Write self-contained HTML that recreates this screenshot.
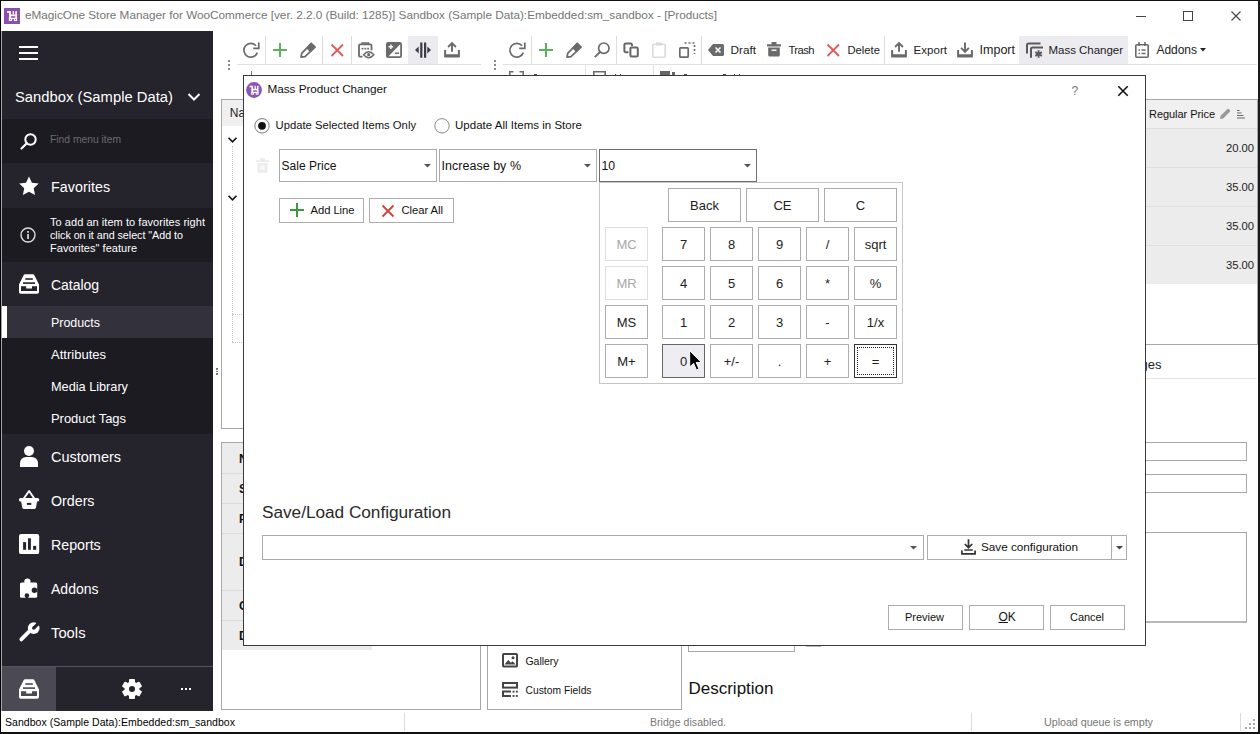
<!DOCTYPE html>
<html><head><meta charset="utf-8"><title>Store Manager</title>
<style>
html,body{margin:0;padding:0;}
body{width:1260px;height:734px;position:relative;overflow:hidden;background:#fff;font-family:"Liberation Sans",sans-serif;}
.t{position:absolute;white-space:nowrap;}
.r{position:absolute;box-sizing:border-box;}
svg{display:block;overflow:visible;}
</style></head><body>
<div class="r" style="left:0px;top:0px;width:1260px;height:734px;background:#fff;"></div>
<svg class="r" style="left:4px;top:8px;" width="16" height="16" viewBox="0 0 16 16"><rect width="16" height="16" fill="#8a4fb0"/><rect x="3.100" y="3.100" width="3.200" height="1.700" fill="#fff"/><rect x="5" y="3.100" width="2" height="7.200" fill="#fff"/><rect x="8.600" y="3.100" width="1.400" height="3.600" fill="#fff"/><rect x="11.300" y="3.100" width="1.700" height="7.200" fill="#fff"/><rect x="6.500" y="6.500" width="5" height="1.700" fill="#fff"/><rect x="4.800" y="9.800" width="3.200" height="3.200" fill="#fff"/><rect x="9.900" y="9.800" width="3.200" height="3.200" fill="#fff"/><rect x="7.500" y="9.800" width="3" height="1.300" fill="#fff"/><rect x="6" y="11" width="0.900" height="0.900" fill="#8a4fb0"/><rect x="11" y="11" width="0.900" height="0.900" fill="#8a4fb0"/></svg>
<div class="t" style="left:25px;top:7.0px;font-size:11.75px;line-height:16px;color:#757575;letter-spacing:-0.006px;">eMagicOne Store Manager for WooCommerce [ver. 2.2.0 (Build: 1285)] Sandbox (Sample Data):Embedded:sm_sandbox - [Products]</div>
<div class="r" style="left:1136px;top:16px;width:10px;height:1px;background:#444;"></div>
<div class="r" style="left:1183px;top:11px;width:10px;height:10px;border:1px solid #444;"></div>
<svg class="r" style="left:1230.5px;top:11px;" width="10" height="10" viewBox="0 0 10 10"><path d="M0.5 0.5L9.5 9.5M9.5 0.5L0.5 9.5" stroke="#444" stroke-width="1.1"/></svg>
<div class="r" style="left:2px;top:31px;width:211px;height:680px;background:#1c1b22;"></div>
<div class="r" style="left:2px;top:31px;width:211px;height:88px;background:#25232c;"></div>
<div class="r" style="left:2px;top:163px;width:211px;height:45px;background:#25232c;"></div>
<div class="r" style="left:2px;top:262px;width:211px;height:44px;background:#25232c;"></div>
<div class="r" style="left:2px;top:306px;width:211px;height:32px;background:#33313c;"></div>
<div class="r" style="left:2px;top:306px;width:5px;height:32px;background:#fff;"></div>
<div class="r" style="left:2px;top:434px;width:211px;height:233px;background:#25232c;"></div>
<div class="r" style="left:2px;top:666px;width:211px;height:45px;background:#25232c;border-top:1px solid #55545d;"></div>
<div class="r" style="left:2px;top:667px;width:54px;height:44px;background:#4b4954;"></div>
<div class="r" style="left:19px;top:46px;width:19px;height:2px;background:#fff;"></div>
<div class="r" style="left:19px;top:52px;width:19px;height:2px;background:#fff;"></div>
<div class="r" style="left:19px;top:58px;width:19px;height:2px;background:#fff;"></div>
<div class="t" style="left:15px;top:87.5px;font-size:14.75px;line-height:19px;color:#fff;letter-spacing:0.029px;">Sandbox (Sample Data)</div>
<svg class="r" style="left:187px;top:92px;" width="14" height="10" viewBox="0 0 14 10"><path d="M1.5 2L7 7.5L12.5 2" fill="none" stroke="#fff" stroke-width="2"/></svg>
<svg class="r" style="left:20px;top:132px;" width="18" height="18" viewBox="0 0 18 18"><circle cx="10.5" cy="7.5" r="5.2" fill="none" stroke="#fff" stroke-width="2"/><path d="M6.8 11.2L1.5 16.5" stroke="#fff" stroke-width="2.2" stroke-linecap="round"/></svg>
<div class="t" style="left:50px;top:133.0px;font-size:10.25px;line-height:14px;color:#6b6a70;letter-spacing:0.027px;">Find menu item</div>
<svg class="r" style="left:19px;top:176px;" width="20" height="20" viewBox="0 0 20 20"><path d="M10 0.5l2.9 6.3 6.8.8-5 4.7 1.3 6.8L10 15.7 3.9 19.1l1.3-6.8-5-4.7 6.8-.8z" fill="#fff"/></svg>
<div class="t" style="left:51px;top:178.0px;font-size:14.25px;line-height:18px;color:#fff;letter-spacing:0.050px;">Favorites</div>
<svg class="r" style="left:20px;top:227px;" width="16" height="16" viewBox="0 0 16 16"><circle cx="8" cy="8" r="7" fill="none" stroke="#ddd" stroke-width="1.4"/><rect x="7.2" y="7" width="1.7" height="5" fill="#ddd"/><rect x="7.2" y="4" width="1.7" height="1.8" fill="#ddd"/></svg>
<div class="t" style="left:50px;top:214.5px;font-size:11.0px;line-height:15px;color:#fff;letter-spacing:0.048px;">To add an item to favorites right</div>
<div class="t" style="left:50px;top:227.5px;font-size:10.75px;line-height:15px;color:#fff;letter-spacing:-0.037px;">click on it and select "Add to</div>
<div class="t" style="left:50px;top:240.5px;font-size:11.0px;line-height:15px;color:#fff;letter-spacing:0.033px;">Favorites" feature</div>
<svg class="r" style="left:19px;top:274px;" width="20" height="20" viewBox="0 0 20 20"><path d="M6 0.300H14a1.500 1.500 0 0 1 1.400 1L20 10.500V18a1.800 1.800 0 0 1-1.800 1.800H1.800A1.800 1.800 0 0 1 0 18V10.500L4.600 1.300A1.500 1.500 0 0 1 6 0.300z" fill="#fff"/><rect x="6.300" y="4.200" width="7.500" height="1.600" fill="#25232c"/><rect x="4" y="8.300" width="12" height="1.600" fill="#25232c"/><path d="M2 12.300h5.200v2.100h5.800v-2.100H18v4.600H2z" fill="#25232c"/></svg>
<div class="t" style="left:51px;top:276.0px;font-size:14.0px;line-height:18px;color:#fff;letter-spacing:-0.044px;">Catalog</div>
<div class="t" style="left:51px;top:314.6px;font-size:12.5px;line-height:16px;color:#fff;letter-spacing:-0.047px;">Products</div>
<div class="t" style="left:51px;top:345.5px;font-size:13.0px;line-height:17px;color:#fff;letter-spacing:0.009px;">Attributes</div>
<div class="t" style="left:51px;top:377.9px;font-size:12.75px;line-height:17px;color:#fff;letter-spacing:-0.021px;">Media Library</div>
<div class="t" style="left:51px;top:409.5px;font-size:13.0px;line-height:17px;color:#fff;letter-spacing:-0.058px;">Product Tags</div>
<svg class="r" style="left:20px;top:446px;" width="18" height="21" viewBox="0 0 18 21"><circle cx="9" cy="5" r="5" fill="#fff"/><path d="M0 21v-4a6 6 0 0 1 6-6h6a6 6 0 0 1 6 6v4z" fill="#fff"/></svg>
<div class="t" style="left:51px;top:448.0px;font-size:14.5px;line-height:18px;color:#fff;letter-spacing:-0.012px;">Customers</div>
<svg class="r" style="left:19px;top:490px;" width="20" height="20" viewBox="0 0 20 20"><path d="M4.600 8.700L10.100 1L15.500 8.700" fill="none" stroke="#fff" stroke-width="1.900" stroke-linejoin="round"/><rect x="0" y="8" width="20.200" height="3.600" rx="1.600" fill="#fff"/><path d="M1.900 10h16.400l-1.300 7.600a1.600 1.600 0 0 1-1.600 1.300H4.800a1.600 1.600 0 0 1-1.600-1.300z" fill="#fff"/><rect x="7.900" y="12.900" width="4.400" height="2" fill="#25232c"/></svg>
<div class="t" style="left:51px;top:492.0px;font-size:14.25px;line-height:18px;color:#fff;letter-spacing:-0.011px;">Orders</div>
<svg class="r" style="left:19px;top:534px;" width="20" height="20" viewBox="0 0 20 20"><rect width="20.200" height="20.100" rx="2.200" fill="#fff"/><rect x="4.100" y="8.100" width="3" height="7.700" fill="#25232c"/><rect x="9" y="4.300" width="2.900" height="11.500" fill="#25232c"/><rect x="14.100" y="11.900" width="3.100" height="3.900" fill="#25232c"/></svg>
<div class="t" style="left:51px;top:536.0px;font-size:14.25px;line-height:18px;color:#fff;letter-spacing:-0.033px;">Reports</div>
<svg class="r" style="left:19px;top:578px;" width="20" height="21" viewBox="0 0 20 21"><rect x="1" y="4.500" width="17.200" height="15.300" rx="1.600" fill="#fff"/><circle cx="8.400" cy="3.500" r="3.100" fill="#fff"/><circle cx="15.400" cy="12.200" r="2.700" fill="#25232c"/><rect x="15.400" y="10.900" width="3" height="2.600" fill="#25232c"/><circle cx="7.900" cy="17.500" r="2.300" fill="#25232c"/><rect x="6.700" y="17.500" width="2.400" height="2.500" fill="#25232c"/></svg>
<div class="t" style="left:51px;top:579.8px;font-size:14.0px;line-height:18px;color:#fff;letter-spacing:0.023px;">Addons</div>
<svg class="r" style="left:18px;top:622px;" width="22" height="22" viewBox="0 0 22 22"><path d="M3.300 17.400L12.800 7.900" stroke="#fff" stroke-width="3.800" stroke-linecap="round"/><circle cx="15.700" cy="6.100" r="5.900" fill="#fff"/><path d="M16.900 7.300L14.500 4.900L20.500-1.100L22.900 1.300z" fill="#25232c"/><circle cx="15.700" cy="6.100" r="1.700" fill="#25232c"/></svg>
<div class="t" style="left:51px;top:623.5px;font-size:14.75px;line-height:19px;color:#fff;letter-spacing:0.017px;">Tools</div>
<svg class="r" style="left:19px;top:679px;" width="20" height="20" viewBox="0 0 20 20"><path d="M6 0.300H14a1.500 1.500 0 0 1 1.400 1L20 10.500V18a1.800 1.800 0 0 1-1.800 1.800H1.800A1.800 1.800 0 0 1 0 18V10.500L4.600 1.300A1.500 1.500 0 0 1 6 0.300z" fill="#fff"/><rect x="6.300" y="4.200" width="7.500" height="1.600" fill="#4b4954"/><rect x="4" y="8.300" width="12" height="1.600" fill="#4b4954"/><path d="M2 12.300h5.200v2.100h5.800v-2.100H18v4.600H2z" fill="#4b4954"/></svg>
<svg class="r" style="left:122px;top:679px;" width="20" height="20" viewBox="0 0 20 20"><g transform="translate(10,10)"><g fill="#fff"><rect x="-3" y="-10.100" width="6" height="20.200" rx="1" transform="rotate(0)"/><rect x="-3" y="-10.100" width="6" height="20.200" rx="1" transform="rotate(60)"/><rect x="-3" y="-10.100" width="6" height="20.200" rx="1" transform="rotate(120)"/><circle r="7.500"/></g><circle r="3" fill="#25232c"/></g></svg>
<div class="r" style="left:181px;top:688px;width:2px;height:2px;background:#fff;"></div>
<div class="r" style="left:185px;top:688px;width:2px;height:2px;background:#fff;"></div>
<div class="r" style="left:189px;top:688px;width:2px;height:2px;background:#fff;"></div>
<div class="r" style="left:0px;top:0px;width:1px;height:734px;background:#000;"></div>
<div class="r" style="left:1px;top:31px;width:1px;height:680px;background:#a5a5ad;"></div>
<div class="r" style="left:0px;top:0px;width:1260px;height:1px;background:#111;"></div>
<div class="r" style="left:1258px;top:0px;width:2px;height:734px;background:#1a1a1a;"></div>
<div class="r" style="left:0px;top:732px;width:1260px;height:2px;background:#111;"></div>
<div class="t" style="left:5px;top:714.5px;font-size:10.5px;line-height:14px;color:#000;letter-spacing:0.044px;">Sandbox (Sample Data):Embedded:sm_sandbox</div>
<div class="r" style="left:404px;top:713px;width:1px;height:18px;background:#dcdcdc;"></div>
<div class="r" style="left:971px;top:713px;width:1px;height:18px;background:#dcdcdc;"></div>
<div class="r" style="left:1240px;top:713px;width:1px;height:18px;background:#dcdcdc;"></div>
<div class="t" style="left:650px;top:715.0px;font-size:10.5px;line-height:14px;color:#777;letter-spacing:0.047px;">Bridge disabled.</div>
<div class="t" style="left:1044px;top:714.5px;font-size:10.75px;line-height:15px;color:#777;letter-spacing:-0.048px;">Upload queue is empty</div>
<div class="r" style="left:1252.5px;top:718.7px;width:2px;height:2px;background:#a8a8a8;"></div>
<div class="r" style="left:1248.5px;top:722.7px;width:2px;height:2px;background:#a8a8a8;"></div>
<div class="r" style="left:1252.5px;top:722.7px;width:2px;height:2px;background:#a8a8a8;"></div>
<div class="r" style="left:1244.5px;top:726.7px;width:2px;height:2px;background:#a8a8a8;"></div>
<div class="r" style="left:1248.5px;top:726.7px;width:2px;height:2px;background:#a8a8a8;"></div>
<div class="r" style="left:1252.5px;top:726.7px;width:2px;height:2px;background:#a8a8a8;"></div>
<div class="r" style="left:408px;top:36px;width:30px;height:28px;background:#ebebf0;"></div>
<div class="r" style="left:237px;top:64px;width:244px;height:1px;background:#e2e2e2;"></div>
<div class="r" style="left:228px;top:60px;width:2px;height:2px;background:#8a8a8a;"></div>
<div class="r" style="left:228px;top:64px;width:2px;height:2px;background:#8a8a8a;"></div>
<div class="r" style="left:228px;top:68px;width:2px;height:2px;background:#8a8a8a;"></div>
<div class="r" style="left:251px;top:71px;width:1px;height:4px;background:#777;"></div>
<svg class="r" style="left:242.5px;top:42px;" width="17" height="16" viewBox="0 0 17 16"><path d="M14.300 10.600A6.900 6.900 0 1 1 13.100 3.800" fill="none" stroke="#6a6a6a" stroke-width="1.700"/><path d="M10.200 6.300h5.600V0.400" fill="none" stroke="#6a6a6a" stroke-width="1.700"/></svg>
<div class="r" style="left:265px;top:36px;width:1px;height:28px;background:#dcdcdc;"></div>
<svg class="r" style="left:273.0px;top:43.0px;" width="14" height="14" viewBox="0 0 14 14"><path d="M7.0 0V14M0 7.0H14" stroke="#5fae5c" stroke-width="2"/></svg>
<svg class="r" style="left:300px;top:42px;" width="16" height="16" viewBox="0 0 16 16"><path d="M1 15.200L1.700 11.300L11.200 1.400L15 5.200L5 14.700Z" fill="none" stroke="#6a6a6a" stroke-width="1.700" stroke-linejoin="round"/><path d="M6.300 6.300L11.200 0.800L15.600 5.200L10.400 10.200Z" fill="#6a6a6a"/></svg>
<div class="r" style="left:322px;top:36px;width:1px;height:28px;background:#dcdcdc;"></div>
<svg class="r" style="left:331.25px;top:43.75px;" width="12.5" height="12.5" viewBox="0 0 12.5 12.5"><path d="M0.500 0.500L12.0 12.0M12.0 0.500L0.500 12.0" stroke="#dc5c58" stroke-width="1.8"/></svg>
<div class="r" style="left:351px;top:36px;width:1px;height:28px;background:#dcdcdc;"></div>
<svg class="r" style="left:358px;top:42px;" width="16" height="16" viewBox="0 0 16 16"><path d="M4.500 14.700H2.300a1.300 1.300 0 0 1-1.300-1.300V3.600a1.300 1.300 0 0 1 1.300-1.300h9.900a1.300 1.300 0 0 1 1.300 1.300V8.300" fill="none" stroke="#6a6a6a" stroke-width="1.800"/><path d="M4.200 2.500V1h6.200v1.500" fill="none" stroke="#6a6a6a" stroke-width="1.700"/><rect x="3.600" y="5.800" width="1.800" height="1.700" fill="#6a6a6a"/><rect x="6.400" y="5.800" width="1.800" height="1.700" fill="#6a6a6a"/><rect x="9.200" y="5.800" width="1.800" height="1.700" fill="#6a6a6a"/><path d="M5.600 12.700q5-6 10.200 0q-5.200 6-10.200 0z" fill="#fff" stroke="#6a6a6a" stroke-width="1.500"/><circle cx="10.700" cy="12.700" r="1.600" fill="#6a6a6a"/></svg>
<svg class="r" style="left:386px;top:42px;" width="16" height="16" viewBox="0 0 16 16"><rect x="0.900" y="0.900" width="14.200" height="14.200" rx="1.200" fill="#6a6a6a" stroke="#6a6a6a" stroke-width="1.800"/><path d="M14.200 2.200V14.200H2.600z" fill="#fff"/><path d="M2.600 4.700h4.600M4.900 2.400v4.600" stroke="#fff" stroke-width="1.400"/><path d="M8.800 11.200h4.300" stroke="#6a6a6a" stroke-width="1.500"/></svg>
<svg class="r" style="left:415px;top:42px;" width="16" height="16" viewBox="0 0 16 16"><path d="M6.300 0.400v15.400M10.100 0.400v15.400" stroke="#3c3c46" stroke-width="2.200"/><path d="M3.700 4.400v7.200L0 8zM12.300 4.400v7.200L16 8z" fill="#3c3c46"/></svg>
<svg class="r" style="left:444px;top:42px;" width="16" height="16" viewBox="0 0 16 16"><path d="M0.100 8.100h2v4.100h11.800V8.100h2v6.300a1.200 1.200 0 0 1-1.200 1.200H1.300a1.200 1.200 0 0 1-1.200-1.200z" fill="#6a6a6a"/><path d="M8 9.800V1.200M4.100 5L8 1l3.900 4" fill="none" stroke="#6a6a6a" stroke-width="1.900"/></svg>
<div class="r" style="left:1019px;top:36px;width:109px;height:28px;background:#ebebf0;"></div>
<div class="r" style="left:503px;top:64px;width:754px;height:1px;background:#e2e2e2;"></div>
<div class="r" style="left:494px;top:60px;width:2px;height:2px;background:#8a8a8a;"></div>
<div class="r" style="left:494px;top:64px;width:2px;height:2px;background:#8a8a8a;"></div>
<div class="r" style="left:494px;top:68px;width:2px;height:2px;background:#8a8a8a;"></div>
<svg class="r" style="left:508.5px;top:42px;" width="17" height="16" viewBox="0 0 17 16"><path d="M14.300 10.600A6.900 6.900 0 1 1 13.100 3.800" fill="none" stroke="#6a6a6a" stroke-width="1.700"/><path d="M10.200 6.300h5.600V0.400" fill="none" stroke="#6a6a6a" stroke-width="1.700"/></svg>
<div class="r" style="left:531px;top:36px;width:1px;height:28px;background:#dcdcdc;"></div>
<svg class="r" style="left:539.0px;top:43.0px;" width="14" height="14" viewBox="0 0 14 14"><path d="M7.0 0V14M0 7.0H14" stroke="#5fae5c" stroke-width="2"/></svg>
<svg class="r" style="left:566px;top:42px;" width="16" height="16" viewBox="0 0 16 16"><path d="M1 15.200L1.700 11.300L11.200 1.400L15 5.200L5 14.700Z" fill="none" stroke="#6a6a6a" stroke-width="1.700" stroke-linejoin="round"/><path d="M6.300 6.300L11.200 0.800L15.600 5.200L10.400 10.200Z" fill="#6a6a6a"/></svg>
<svg class="r" style="left:594px;top:42px;" width="16" height="16" viewBox="0 0 16 16"><circle cx="9.800" cy="6.200" r="5.200" fill="none" stroke="#6a6a6a" stroke-width="1.700"/><path d="M6 10L0.800 15.200" stroke="#6a6a6a" stroke-width="1.900"/></svg>
<div class="r" style="left:616px;top:36px;width:1px;height:28px;background:#dcdcdc;"></div>
<svg class="r" style="left:623px;top:42px;" width="16" height="16" viewBox="0 0 16 16"><path d="M5.500 10.200H2.600a1.200 1.200 0 0 1-1.200-1.200V2.800A1.200 1.200 0 0 1 2.600 1.600h5.200A1.200 1.200 0 0 1 9 2.800v1.200" fill="none" stroke="#666" stroke-width="2"/><rect x="7.400" y="5.400" width="7.400" height="9" rx="1.200" fill="none" stroke="#666" stroke-width="2"/></svg>
<svg class="r" style="left:652px;top:42px;" width="14" height="16" viewBox="0 0 14 16"><rect x="0.800" y="2.300" width="12.400" height="12.900" rx="1.200" fill="none" stroke="#dadada" stroke-width="1.600"/><rect x="4" y="0.500" width="6" height="3" fill="#dadada"/></svg>
<svg class="r" style="left:679px;top:42px;" width="16" height="16" viewBox="0 0 16 16"><rect x="0.800" y="5.800" width="8.400" height="9.400" rx="1" fill="none" stroke="#6a6a6a" stroke-width="1.700"/><path d="M5.500 1h10v11" fill="none" stroke="#6a6a6a" stroke-width="1.600" stroke-dasharray="2 2"/></svg>
<div class="r" style="left:701px;top:36px;width:1px;height:28px;background:#dcdcdc;"></div>
<svg class="r" style="left:708px;top:44px;" width="16" height="12" viewBox="0 0 16 12"><path d="M5 0h9.500a1.500 1.500 0 0 1 1.500 1.500v9a1.500 1.500 0 0 1-1.500 1.500H5L0 6z" fill="#6a6a6a"/><path d="M7.500 3.500l5 5M12.500 3.500l-5 5" stroke="#fff" stroke-width="1.500"/></svg>
<div class="t" style="left:730.5px;top:42.0px;font-size:11.75px;line-height:16px;color:#222;letter-spacing:0.010px;">Draft</div>
<svg class="r" style="left:767px;top:42px;" width="14" height="15" viewBox="0 0 14 15"><path d="M0 2.200h14v2.300H0zM4.500 0h5v2.500h-5z" fill="#6a6a6a"/><path d="M1.200 5.500h11.600v7.500a1.500 1.500 0 0 1-1.500 1.500H2.700a1.500 1.500 0 0 1-1.500-1.500z" fill="#6a6a6a"/><rect x="4.500" y="7.500" width="5" height="1.400" fill="#fff"/></svg>
<div class="t" style="left:788.5px;top:42.5px;font-size:11.25px;line-height:15px;color:#222;letter-spacing:-0.584px;">Trash</div>
<svg class="r" style="left:826.75px;top:43.75px;" width="12.5" height="12.5" viewBox="0 0 12.5 12.5"><path d="M0.500 0.500L12.0 12.0M12.0 0.500L0.500 12.0" stroke="#dc5c58" stroke-width="1.8"/></svg>
<div class="t" style="left:847.5px;top:42.5px;font-size:11.25px;line-height:15px;color:#222;letter-spacing:-0.004px;">Delete</div>
<div class="r" style="left:884px;top:36px;width:1px;height:28px;background:#dcdcdc;"></div>
<svg class="r" style="left:891px;top:42px;" width="16" height="16" viewBox="0 0 16 16"><path d="M0.100 8.100h2v4.100h11.800V8.100h2v6.300a1.200 1.200 0 0 1-1.200 1.200H1.300a1.200 1.200 0 0 1-1.200-1.200z" fill="#6a6a6a"/><path d="M8 9.800V1.200M4.100 5L8 1l3.900 4" fill="none" stroke="#6a6a6a" stroke-width="1.900"/></svg>
<div class="t" style="left:913.5px;top:42.0px;font-size:11.5px;line-height:16px;color:#222;letter-spacing:0.052px;">Export</div>
<svg class="r" style="left:957px;top:42px;" width="16" height="16" viewBox="0 0 16 16"><path d="M0.100 8.100h2v4.100h11.800V8.100h2v6.300a1.200 1.200 0 0 1-1.200 1.200H1.300a1.200 1.200 0 0 1-1.200-1.200z" fill="#6a6a6a"/><path d="M8 0.400V9.400M4.100 5.800L8 9.800l3.900-4" fill="none" stroke="#6a6a6a" stroke-width="1.900"/></svg>
<div class="t" style="left:979.5px;top:42.0px;font-size:12.5px;line-height:16px;color:#222;letter-spacing:0.016px;">Import</div>
<svg class="r" style="left:1026px;top:42px;" width="17" height="16" viewBox="0 0 17 16"><path d="M1 11.500V3.200A1.600 1.600 0 0 1 2.600 1.600H14.500" fill="none" stroke="#5a5a5a" stroke-width="2"/><path d="M5 15.800V7.200A1.600 1.600 0 0 1 6.600 5.600H17" fill="none" stroke="#5a5a5a" stroke-width="2"/><path d="M12.600 8.200v7.600M9.300 10.100l6.600 3.800M15.900 10.100l-6.600 3.800" stroke="#5a5a5a" stroke-width="1.800"/></svg>
<div class="t" style="left:1048.5px;top:42.0px;font-size:11.5px;line-height:16px;color:#222;letter-spacing:-0.026px;">Mass Changer</div>
<svg class="r" style="left:1135.2px;top:42px;" width="14" height="16" viewBox="0 0 14 16"><rect x="0.800" y="2.800" width="12.400" height="12.400" rx="1" fill="none" stroke="#6a6a6a" stroke-width="1.600"/><path d="M4 0v4M10 0v4" stroke="#6a6a6a" stroke-width="1.600"/><path d="M3.500 8h1.500M6.500 8h4M3.500 11.500h1.500M6.500 11.500h4" stroke="#6a6a6a" stroke-width="1.400"/></svg>
<div class="t" style="left:1156.5px;top:42.0px;font-size:12.0px;line-height:16px;color:#222;letter-spacing:-0.040px;">Addons</div>
<svg class="r" style="left:1199.5px;top:48px;" width="6" height="4" viewBox="0 0 6 4"><path d="M0 0h6L3 3.500z" fill="#222"/></svg>
<div class="r" style="left:585px;top:65px;width:1px;height:10px;background:#e2e2e2;"></div>
<div class="r" style="left:653px;top:65px;width:1px;height:10px;background:#e2e2e2;"></div>
<svg class="r" style="left:509px;top:71px;" width="15" height="4" viewBox="0 0 15 4"><path d="M0.800 4V0.800H4.500M10.500 0.800H14.200V4" fill="none" stroke="#6a6a6a" stroke-width="1.500"/></svg>
<svg class="r" style="left:593px;top:71px;" width="13" height="4" viewBox="0 0 13 4"><path d="M0.800 4V0.800H12.200V4" fill="none" stroke="#6a6a6a" stroke-width="1.600"/></svg>
<div class="r" style="left:660px;top:71px;width:10px;height:4px;background:#666;"></div>
<div class="r" style="left:672px;top:72px;width:3px;height:3px;background:#666;"></div>
<div class="r" style="left:534px;top:73.5px;width:3px;height:1.5px;background:#444;"></div>
<div class="r" style="left:615px;top:73.5px;width:1px;height:1.5px;background:#444;"></div>
<div class="r" style="left:620px;top:73.5px;width:1px;height:1.5px;background:#444;"></div>
<div class="r" style="left:684px;top:73.5px;width:3px;height:1.5px;background:#444;"></div>
<div class="r" style="left:723px;top:73.5px;width:3px;height:1.5px;background:#444;"></div>
<div class="r" style="left:734px;top:73.5px;width:1px;height:1.5px;background:#444;"></div>
<div class="r" style="left:739px;top:73.5px;width:1px;height:1.5px;background:#444;"></div>
<div class="r" style="left:221px;top:99px;width:260px;height:330px;border:1px solid #a8a8a8;"></div>
<div class="r" style="left:222px;top:100px;width:30px;height:26px;background:#f0f0f0;"></div>
<div class="t" style="left:229.8px;top:105.0px;font-size:12px;line-height:16px;color:#222;letter-spacing:0.000px;">Na</div>
<svg class="r" style="left:228px;top:137px;" width="9" height="6" viewBox="0 0 9 6"><path d="M0.500 0.800L4.500 4.800L8.500 0.800" fill="none" stroke="#111" stroke-width="1.600"/></svg>
<svg class="r" style="left:228px;top:195px;" width="9" height="6" viewBox="0 0 9 6"><path d="M0.500 0.800L4.500 4.800L8.500 0.800" fill="none" stroke="#111" stroke-width="1.600"/></svg>
<div class="r" style="left:232px;top:146px;width:0px;height:44px;border:0;border-left:1px dotted #c8c8c8;"></div>
<div class="r" style="left:232px;top:204px;width:0px;height:138px;border:0;border-left:1px dotted #c8c8c8;"></div>
<div class="r" style="left:232px;top:314px;width:14px;height:0px;border-top:1px dotted #c8c8c8;"></div>
<div class="r" style="left:232px;top:342px;width:14px;height:0px;border-top:1px dotted #c8c8c8;"></div>
<div class="r" style="left:216px;top:368.0px;width:1.6px;height:1.6px;background:#777;"></div>
<div class="r" style="left:216px;top:370.7px;width:1.6px;height:1.6px;background:#777;"></div>
<div class="r" style="left:216px;top:373.4px;width:1.6px;height:1.6px;background:#777;"></div>
<div class="r" style="left:1145px;top:99px;width:113px;height:246px;background:#fff;border-bottom:1px solid #a8a8a8;border-right:1px solid #a8a8a8;border-top:1px solid #a8a8a8;"></div>
<div class="r" style="left:1145px;top:100px;width:112px;height:28px;background:#f0f0f0;"></div>
<div class="t" style="left:1149px;top:106.5px;font-size:11.0px;line-height:15px;color:#111;letter-spacing:-0.053px;">Regular Price</div>
<svg class="r" style="left:1219px;top:108px;" width="12" height="12" viewBox="0 0 12 12"><path d="M1 11l0.600-3.200L8.400 1a1 1 0 0 1 1.400 0L11 2.200a1 1 0 0 1 0 1.400L4.200 10.400z" fill="#999"/></svg>
<svg class="r" style="left:1237px;top:110px;" width="8" height="8" viewBox="0 0 8 8"><path d="M0 0.500h2.500M0 3h4.500M0 5.500h6.500M0 8h8" stroke="#666" stroke-width="1"/></svg>
<div class="r" style="left:1145px;top:128px;width:112px;height:39px;background:#ececec;border-top:1px solid #e0e0e0;"></div>
<div class="t" style="left:1226px;top:140.5px;font-size:11.25px;line-height:15px;color:#222;letter-spacing:-0.037px;">20.00</div>
<div class="r" style="left:1145px;top:167px;width:112px;height:39px;background:#ececec;border-top:1px solid #e0e0e0;"></div>
<div class="t" style="left:1226px;top:179.5px;font-size:11.25px;line-height:15px;color:#222;letter-spacing:-0.037px;">35.00</div>
<div class="r" style="left:1145px;top:206px;width:112px;height:39px;background:#ececec;border-top:1px solid #e0e0e0;"></div>
<div class="t" style="left:1226px;top:218.5px;font-size:11.25px;line-height:15px;color:#222;letter-spacing:-0.037px;">35.00</div>
<div class="r" style="left:1145px;top:245px;width:112px;height:39px;background:#ececec;border-top:1px solid #e0e0e0;"></div>
<div class="t" style="left:1226px;top:257.5px;font-size:11.25px;line-height:15px;color:#222;letter-spacing:-0.037px;">35.00</div>
<div class="t" style="left:1140.5px;top:355.5px;font-size:13px;line-height:17px;color:#222;letter-spacing:0.000px;">ges</div>
<div class="r" style="left:1145px;top:378px;width:112px;height:1px;background:#e4e4e4;"></div>
<div class="r" style="left:1100px;top:442px;width:147px;height:19px;border:1px solid #a8a8a8;"></div>
<div class="r" style="left:1100px;top:474px;width:147px;height:19px;border:1px solid #a8a8a8;"></div>
<div class="r" style="left:1100px;top:532px;width:147px;height:91px;border:1px solid #a8a8a8;border-bottom:2px solid #b8b8b8;"></div>
<div class="r" style="left:221px;top:442px;width:260px;height:268px;border:1px solid #a8a8a8;"></div>
<div class="r" style="left:222px;top:443px;width:150px;height:207px;background:#ececec;"></div>
<div class="r" style="left:222px;top:473px;width:150px;height:1px;background:#dcdcdc;"></div>
<div class="r" style="left:222px;top:503px;width:150px;height:1px;background:#dcdcdc;"></div>
<div class="r" style="left:222px;top:533px;width:150px;height:1px;background:#dcdcdc;"></div>
<div class="r" style="left:222px;top:590px;width:150px;height:1px;background:#dcdcdc;"></div>
<div class="r" style="left:222px;top:620px;width:150px;height:1px;background:#dcdcdc;"></div>
<div class="t" style="left:239px;top:451.0px;font-size:12px;line-height:16px;color:#111;letter-spacing:0.000px;font-weight:bold;">N</div>
<div class="t" style="left:239px;top:480.5px;font-size:12px;line-height:16px;color:#111;letter-spacing:0.000px;font-weight:bold;">S</div>
<div class="t" style="left:239px;top:511.0px;font-size:12px;line-height:16px;color:#111;letter-spacing:0.000px;font-weight:bold;">P</div>
<div class="t" style="left:239px;top:554.0px;font-size:12px;line-height:16px;color:#111;letter-spacing:0.000px;font-weight:bold;">D</div>
<div class="t" style="left:239px;top:598.0px;font-size:12px;line-height:16px;color:#111;letter-spacing:0.000px;font-weight:bold;">C</div>
<div class="t" style="left:239px;top:628.0px;font-size:12px;line-height:16px;color:#111;letter-spacing:0.000px;font-weight:bold;">D</div>
<div class="r" style="left:487px;top:600px;width:195px;height:110px;border:1px solid #a8a8a8;"></div>
<svg class="r" style="left:502px;top:652.5px;" width="16" height="14.5" viewBox="0 0 16 14.5"><rect x="1" y="1" width="14" height="12.500" rx="0.800" fill="none" stroke="#444" stroke-width="2"/><path d="M2.500 11.500l3.800-4.600 2.600 2.800 1.800-1.500 3 3.300z" fill="#444"/><circle cx="11" cy="4.800" r="1.500" fill="#444"/></svg>
<div class="t" style="left:525.5px;top:654.0px;font-size:10.5px;line-height:14px;color:#111;letter-spacing:-0.043px;">Gallery</div>
<svg class="r" style="left:502px;top:681.7px;" width="16" height="15" viewBox="0 0 16 15"><rect x="1" y="1" width="14" height="4.600" fill="none" stroke="#444" stroke-width="2"/><path d="M9 9.600H1V14H9" fill="none" stroke="#444" stroke-width="2"/><rect x="10.600" y="8.700" width="1.900" height="1.900" fill="#444"/><rect x="13.900" y="8.700" width="1.900" height="1.900" fill="#444"/><rect x="10.600" y="13" width="1.900" height="1.900" fill="#444"/><rect x="13.900" y="13" width="1.900" height="1.900" fill="#444"/></svg>
<div class="t" style="left:525.5px;top:683.8px;font-size:10.25px;line-height:14px;color:#111;letter-spacing:0.041px;">Custom Fields</div>
<div class="r" style="left:688px;top:630px;width:107px;height:22px;border:1px solid #a8a8a8;"></div>
<div class="r" style="left:806px;top:646px;width:15px;height:1px;background:#bbb;"></div>
<div class="t" style="left:688.5px;top:677.5px;font-size:17.0px;line-height:21px;color:#111;letter-spacing:-0.004px;">Description</div>
<div class="r" style="left:243px;top:75px;width:903px;height:571px;background:#fff;border:1px solid #3a3a3a;"></div>
<svg class="r" style="left:246.1px;top:81.8px;" width="16" height="16" viewBox="0 0 16 16"><circle cx="8" cy="8" r="7.900" fill="#8d55b3"/><g transform="translate(0.800,1) scale(0.900)"><rect x="3.100" y="3.100" width="3.200" height="1.700" fill="#fff"/><rect x="5" y="3.100" width="2" height="7.200" fill="#fff"/><rect x="8.600" y="3.100" width="1.400" height="3.600" fill="#fff"/><rect x="11.300" y="3.100" width="1.700" height="7.200" fill="#fff"/><rect x="6.500" y="6.500" width="5" height="1.700" fill="#fff"/><rect x="4.800" y="9.800" width="3.200" height="3.200" fill="#fff"/><rect x="9.900" y="9.800" width="3.200" height="3.200" fill="#fff"/><rect x="7.500" y="9.800" width="3" height="1.300" fill="#fff"/><rect x="6" y="11" width="0.900" height="0.900" fill="#8d55b3"/><rect x="11" y="11" width="0.900" height="0.900" fill="#8d55b3"/></g></svg>
<div class="t" style="left:267.5px;top:81.0px;font-size:11.75px;line-height:16px;color:#111;letter-spacing:-0.035px;">Mass Product Changer</div>
<div class="t" style="left:1071.5px;top:83.0px;font-size:12px;line-height:16px;color:#777;letter-spacing:0.000px;">?</div>
<svg class="r" style="left:1118px;top:85.5px;" width="10" height="10" viewBox="0 0 10 10"><path d="M0.300 0.300L9.700 9.700M9.700 0.300L0.300 9.700" stroke="#111" stroke-width="1.600"/></svg>
<svg class="r" style="left:254px;top:117.5px;" width="16" height="16" viewBox="0 0 16 16"><circle cx="8" cy="7.800" r="7.200" fill="#fff" stroke="#7a7a7a" stroke-width="1"/><circle cx="8" cy="7.800" r="3.900" fill="#111"/></svg>
<div class="t" style="left:275.5px;top:117.5px;font-size:11.25px;line-height:15px;color:#111;letter-spacing:0.018px;">Update Selected Items Only</div>
<svg class="r" style="left:434px;top:117.5px;" width="16" height="16" viewBox="0 0 16 16"><circle cx="8" cy="7.800" r="7.200" fill="#fff" stroke="#8a8a8a" stroke-width="1"/></svg>
<div class="t" style="left:455px;top:117.0px;font-size:11.5px;line-height:16px;color:#111;letter-spacing:0.018px;">Update All Items in Store</div>
<svg class="r" style="left:256px;top:157px;" width="13" height="16" viewBox="0 0 13 16"><path d="M0 3.200h13v1.800H0zM4 1.200h5v2h-5z" fill="#ececec"/><path d="M1.500 6h10v8.500a1.200 1.200 0 0 1-1.200 1.200H2.700a1.200 1.200 0 0 1-1.200-1.200z" fill="#ececec"/><rect x="4" y="8.500" width="5" height="4" fill="#f7f7f7"/></svg>
<div class="r" style="left:279px;top:149px;width:158px;height:33px;background:#fff;border:1px solid #ababab;"></div>
<div class="t" style="left:281.5px;top:157.8px;font-size:12.0px;line-height:16px;color:#111;letter-spacing:0.034px;">Sale Price</div>
<svg class="r" style="left:424px;top:164.0px;" width="7" height="4" viewBox="0 0 7 4"><path d="M0 0h7L3.500 3.500z" fill="#555"/></svg>
<div class="r" style="left:439px;top:149px;width:158px;height:33px;background:#fff;border:1px solid #ababab;"></div>
<div class="t" style="left:441.5px;top:157.8px;font-size:12.5px;line-height:16px;color:#111;letter-spacing:0.025px;">Increase by %</div>
<svg class="r" style="left:584px;top:164.0px;" width="7" height="4" viewBox="0 0 7 4"><path d="M0 0h7L3.500 3.500z" fill="#555"/></svg>
<div class="r" style="left:279px;top:198px;width:85px;height:25px;background:#fff;border:1px solid #adadad;"></div>
<svg class="r" style="left:290.0px;top:203.0px;" width="14" height="14" viewBox="0 0 14 14"><path d="M7.0 0V14M0 7.0H14" stroke="#3c9a3c" stroke-width="2"/></svg>
<div class="t" style="left:310.5px;top:202.5px;font-size:11.25px;line-height:15px;color:#111;letter-spacing:-0.058px;">Add Line</div>
<div class="r" style="left:369px;top:198px;width:85px;height:25px;background:#fff;border:1px solid #adadad;"></div>
<svg class="r" style="left:382.0px;top:204.5px;" width="12" height="12" viewBox="0 0 12 12"><path d="M0.500 0.500L11.5 11.5M11.5 0.500L0.500 11.5" stroke="#d43f3a" stroke-width="1.8"/></svg>
<div class="t" style="left:401.5px;top:202.5px;font-size:11.25px;line-height:15px;color:#111;letter-spacing:-0.049px;">Clear All</div>
<div class="r" style="left:599px;top:182px;width:304px;height:202px;background:#fff;border:1px solid #c6c6c6;"></div>
<div class="r" style="left:668px;top:188px;width:73px;height:34px;background:#fff;border:1px solid #adadad;"></div>
<div class="t" style="left:690.048828125px;top:196.8px;font-size:13px;line-height:17px;color:#222;letter-spacing:0.000px;">Back</div>
<div class="r" style="left:746px;top:188px;width:73px;height:34px;background:#fff;border:1px solid #adadad;"></div>
<div class="t" style="left:773.4697265625px;top:196.8px;font-size:13px;line-height:17px;color:#222;letter-spacing:0.000px;">CE</div>
<div class="r" style="left:824px;top:188px;width:73px;height:34px;background:#fff;border:1px solid #adadad;"></div>
<div class="t" style="left:855.8056640625px;top:196.8px;font-size:13px;line-height:17px;color:#222;letter-spacing:0.000px;">C</div>
<div class="r" style="left:605px;top:227px;width:43px;height:34px;background:#fff;border:1px solid #dedede;"></div>
<div class="t" style="left:616.390625px;top:235.8px;font-size:13px;line-height:17px;color:#a8a8a8;letter-spacing:0.000px;">MC</div>
<div class="r" style="left:662px;top:227px;width:43px;height:34px;background:#fff;border:1px solid #adadad;"></div>
<div class="t" style="left:679.884765625px;top:235.8px;font-size:13px;line-height:17px;color:#222;letter-spacing:0.000px;">7</div>
<div class="r" style="left:710px;top:227px;width:43px;height:34px;background:#fff;border:1px solid #adadad;"></div>
<div class="t" style="left:727.884765625px;top:235.8px;font-size:13px;line-height:17px;color:#222;letter-spacing:0.000px;">8</div>
<div class="r" style="left:758px;top:227px;width:43px;height:34px;background:#fff;border:1px solid #adadad;"></div>
<div class="t" style="left:775.884765625px;top:235.8px;font-size:13px;line-height:17px;color:#222;letter-spacing:0.000px;">9</div>
<div class="r" style="left:806px;top:227px;width:43px;height:34px;background:#fff;border:1px solid #adadad;"></div>
<div class="t" style="left:825.6943359375px;top:235.8px;font-size:13px;line-height:17px;color:#222;letter-spacing:0.000px;">/</div>
<div class="r" style="left:854px;top:227px;width:43px;height:34px;background:#fff;border:1px solid #adadad;"></div>
<div class="t" style="left:864.6640625px;top:235.8px;font-size:13px;line-height:17px;color:#222;letter-spacing:0.000px;">sqrt</div>
<div class="r" style="left:605px;top:266px;width:43px;height:34px;background:#fff;border:1px solid #dedede;"></div>
<div class="t" style="left:616.390625px;top:274.8px;font-size:13px;line-height:17px;color:#a8a8a8;letter-spacing:0.000px;">MR</div>
<div class="r" style="left:662px;top:266px;width:43px;height:34px;background:#fff;border:1px solid #adadad;"></div>
<div class="t" style="left:679.884765625px;top:274.8px;font-size:13px;line-height:17px;color:#222;letter-spacing:0.000px;">4</div>
<div class="r" style="left:710px;top:266px;width:43px;height:34px;background:#fff;border:1px solid #adadad;"></div>
<div class="t" style="left:727.884765625px;top:274.8px;font-size:13px;line-height:17px;color:#222;letter-spacing:0.000px;">5</div>
<div class="r" style="left:758px;top:266px;width:43px;height:34px;background:#fff;border:1px solid #adadad;"></div>
<div class="t" style="left:775.884765625px;top:274.8px;font-size:13px;line-height:17px;color:#222;letter-spacing:0.000px;">6</div>
<div class="r" style="left:806px;top:266px;width:43px;height:34px;background:#fff;border:1px solid #adadad;"></div>
<div class="t" style="left:824.970703125px;top:274.8px;font-size:13px;line-height:17px;color:#222;letter-spacing:0.000px;">*</div>
<div class="r" style="left:854px;top:266px;width:43px;height:34px;background:#fff;border:1px solid #adadad;"></div>
<div class="t" style="left:869.720703125px;top:274.8px;font-size:13px;line-height:17px;color:#222;letter-spacing:0.000px;">%</div>
<div class="r" style="left:605px;top:305px;width:43px;height:34px;background:#fff;border:1px solid #adadad;"></div>
<div class="t" style="left:616.7490234375px;top:313.8px;font-size:13px;line-height:17px;color:#222;letter-spacing:0.000px;">MS</div>
<div class="r" style="left:662px;top:305px;width:43px;height:34px;background:#fff;border:1px solid #adadad;"></div>
<div class="t" style="left:679.884765625px;top:313.8px;font-size:13px;line-height:17px;color:#222;letter-spacing:0.000px;">1</div>
<div class="r" style="left:710px;top:305px;width:43px;height:34px;background:#fff;border:1px solid #adadad;"></div>
<div class="t" style="left:727.884765625px;top:313.8px;font-size:13px;line-height:17px;color:#222;letter-spacing:0.000px;">2</div>
<div class="r" style="left:758px;top:305px;width:43px;height:34px;background:#fff;border:1px solid #adadad;"></div>
<div class="t" style="left:775.884765625px;top:313.8px;font-size:13px;line-height:17px;color:#222;letter-spacing:0.000px;">3</div>
<div class="r" style="left:806px;top:305px;width:43px;height:34px;background:#fff;border:1px solid #adadad;"></div>
<div class="t" style="left:825.3349609375px;top:313.8px;font-size:13px;line-height:17px;color:#222;letter-spacing:0.000px;">-</div>
<div class="r" style="left:854px;top:305px;width:43px;height:34px;background:#fff;border:1px solid #adadad;"></div>
<div class="t" style="left:866.8291015625px;top:313.8px;font-size:13px;line-height:17px;color:#222;letter-spacing:0.000px;">1/x</div>
<div class="r" style="left:605px;top:344px;width:43px;height:34px;background:#fff;border:1px solid #adadad;"></div>
<div class="t" style="left:617.2890625px;top:352.8px;font-size:13px;line-height:17px;color:#222;letter-spacing:0.000px;">M+</div>
<div class="r" style="left:662px;top:344px;width:43px;height:34px;background:#eeeef2;border:1px solid #66666a;"></div>
<div class="t" style="left:679.884765625px;top:352.8px;font-size:13px;line-height:17px;color:#222;letter-spacing:0.000px;">0</div>
<div class="r" style="left:710px;top:344px;width:43px;height:34px;background:#fff;border:1px solid #adadad;"></div>
<div class="t" style="left:723.7333984375px;top:352.8px;font-size:13px;line-height:17px;color:#222;letter-spacing:0.000px;">+/-</div>
<div class="r" style="left:758px;top:344px;width:43px;height:34px;background:#fff;border:1px solid #adadad;"></div>
<div class="t" style="left:777.6943359375px;top:352.8px;font-size:13px;line-height:17px;color:#222;letter-spacing:0.000px;">.</div>
<div class="r" style="left:806px;top:344px;width:43px;height:34px;background:#fff;border:1px solid #adadad;"></div>
<div class="t" style="left:823.7041015625px;top:352.8px;font-size:13px;line-height:17px;color:#222;letter-spacing:0.000px;">+</div>
<div class="r" style="left:854px;top:344px;width:43px;height:34px;background:#fff;border:1px solid #333;"></div>
<div class="t" style="left:871.7041015625px;top:352.8px;font-size:13px;line-height:17px;color:#222;letter-spacing:0.000px;">=</div>
<div class="r" style="left:857px;top:347px;width:37px;height:28px;border:1px dotted #222;"></div>
<div class="r" style="left:599px;top:149px;width:158px;height:33px;background:#fff;border:1px solid #6e6e6e;"></div>
<div class="t" style="left:601.5px;top:157.8px;font-size:12.25px;line-height:16px;color:#111;letter-spacing:-0.125px;">10</div>
<svg class="r" style="left:744px;top:164.0px;" width="7" height="4" viewBox="0 0 7 4"><path d="M0 0h7L3.500 3.500z" fill="#555"/></svg>
<svg class="r" style="left:689px;top:350px;" width="12" height="20" viewBox="0 0 12 20"><path d="M0.700 0.700V17l3.900-3.600 2.800 6.600 2.600-1.100-2.800-6.400h5.200z" fill="#000" stroke="#fff" stroke-width="1"/></svg>
<div class="t" style="left:262px;top:501.5px;font-size:17.25px;line-height:21px;color:#2a2a2a;letter-spacing:-0.040px;">Save/Load Configuration</div>
<div class="r" style="left:262px;top:535px;width:662px;height:25px;background:#fff;border:1px solid #ababab;"></div>
<svg class="r" style="left:910px;top:545.5px;" width="7" height="4" viewBox="0 0 7 4"><path d="M0 0h7L3.500 3.500z" fill="#555"/></svg>
<div class="r" style="left:927px;top:535px;width:200px;height:25px;background:#fff;border:1px solid #adadad;"></div>
<div class="r" style="left:1111px;top:535px;width:1px;height:25px;background:#adadad;"></div>
<svg class="r" style="left:1115.5px;top:545.5px;" width="7" height="4" viewBox="0 0 7 4"><path d="M0 0h7L3.500 3.500z" fill="#444"/></svg>
<svg class="r" style="left:961px;top:539px;" width="15" height="16" viewBox="0 0 15 16"><path d="M0.900 11.500V14.800H14.100V11.500" fill="none" stroke="#333" stroke-width="1.700"/><path d="M7.500 0.300V8.600M3.800 5l3.700 3.700 3.700-3.700M3.300 11H11.700" fill="none" stroke="#333" stroke-width="1.700"/></svg>
<div class="t" style="left:981px;top:539.0px;font-size:11.75px;line-height:16px;color:#111;letter-spacing:-0.019px;">Save configuration</div>
<div class="r" style="left:888px;top:605px;width:75px;height:25px;background:#fff;border:1px solid #adadad;"></div>
<div class="t" style="left:905px;top:609.5px;font-size:11.0px;line-height:15px;color:#111;letter-spacing:-0.021px;">Preview</div>
<div class="r" style="left:969px;top:605px;width:75px;height:25px;background:#fff;border:1px solid #adadad;"></div>
<div class="t" style="left:998.5px;top:609.0px;font-size:12px;line-height:16px;color:#111;letter-spacing:0.000px;"><u>O</u>K</div>
<div class="r" style="left:1050px;top:605px;width:75px;height:25px;background:#fff;border:1px solid #adadad;"></div>
<div class="t" style="left:1070px;top:609.5px;font-size:11.0px;line-height:15px;color:#111;letter-spacing:-0.048px;">Cancel</div>
</body></html>
